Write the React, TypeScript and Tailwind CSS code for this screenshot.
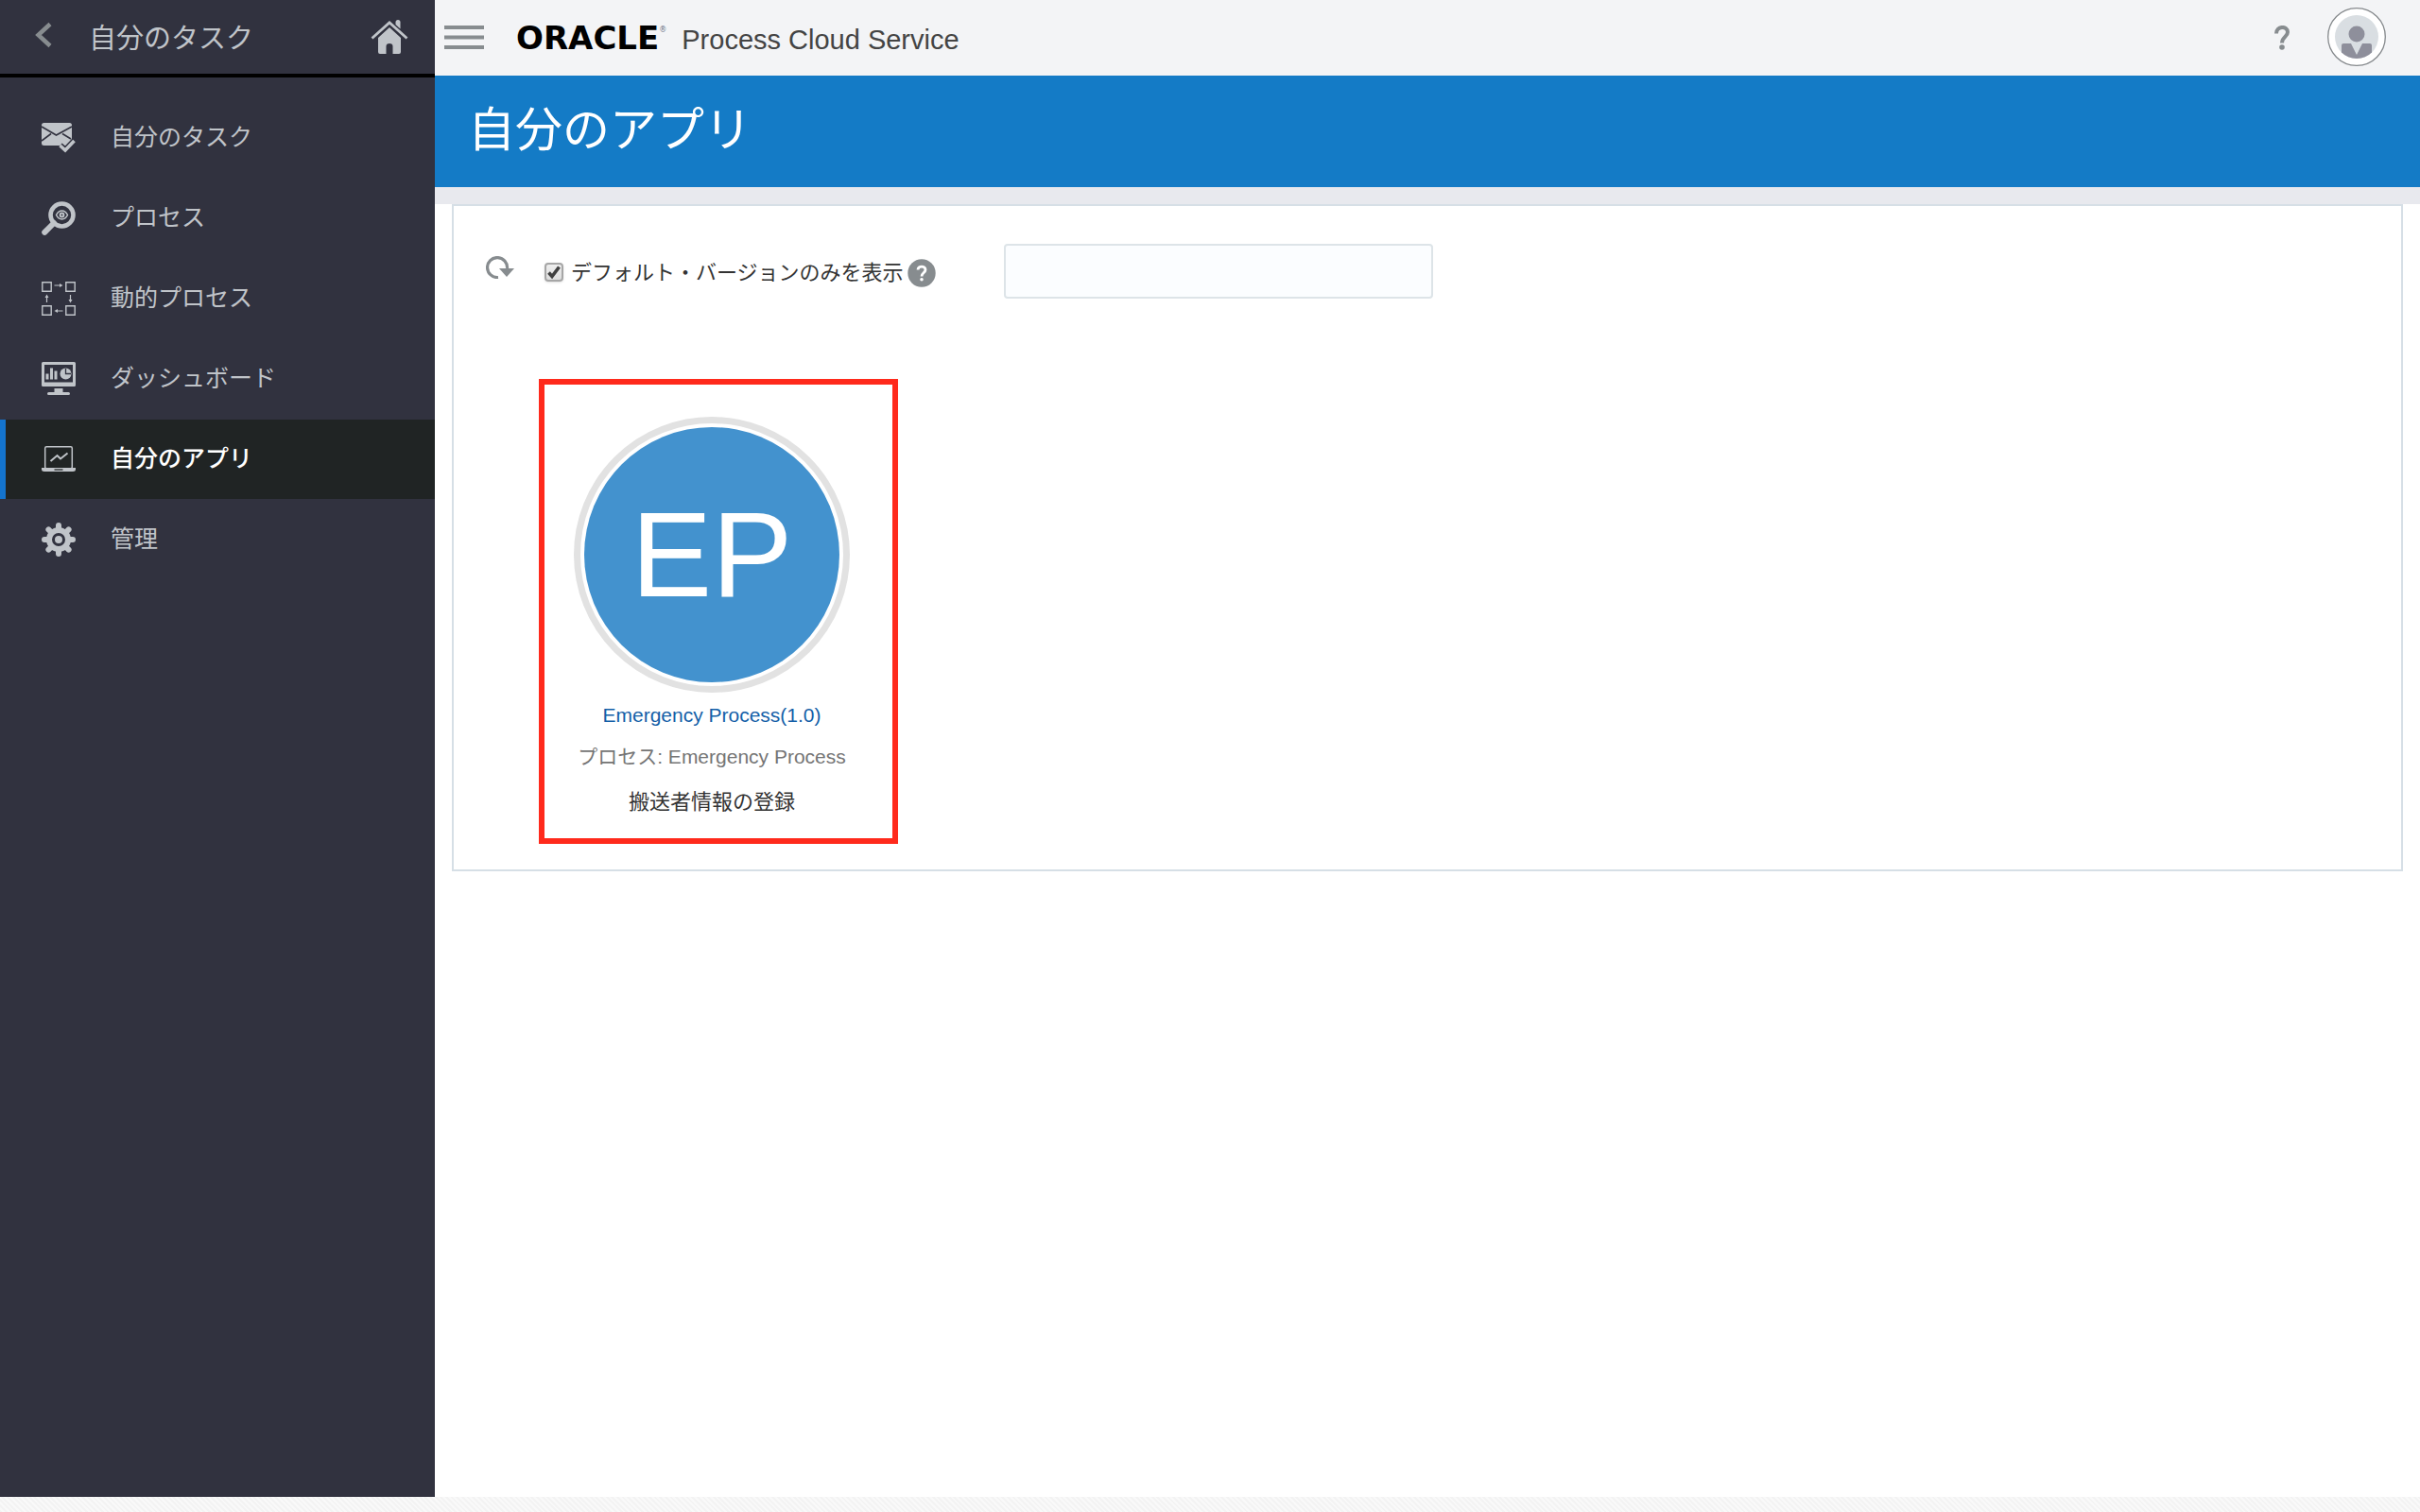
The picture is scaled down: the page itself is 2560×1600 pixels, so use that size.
import type { ReactNode } from "react";

const CheckedMail = () => (
  <svg className="size-9" viewBox="0 0 36 36" aria-hidden="true">
    <rect x="0" y="2" width="32" height="24" rx="2.5" fill="currentColor" />
    <path d="M0 6 L15.500 15 L32 6 M0 21 L10 13.500 M31 19 L22 13.500" fill="none" stroke="#31323f" strokeWidth="1.600" />
    <path d="M19.500 26 L25 31 L34.500 21" fill="none" stroke="#31323f" strokeWidth="6.500" />
    <path d="M19.500 26 L25 31 L34.500 21" fill="none" stroke="currentColor" strokeWidth="3.600" />
  </svg>
);

const SearchEye = () => (
  <svg className="size-9" viewBox="0 0 36 36" fill="none" stroke="currentColor" aria-hidden="true">
    <circle cx="21.500" cy="14.500" r="12" strokeWidth="4.600" />
    <path d="M13 23 L3.200 32.800" strokeWidth="6" strokeLinecap="round" />
    <path d="M15.500 14.500 C18.500 8.500 24.500 8.500 27.500 14.500 C24.500 20.500 18.500 20.500 15.500 14.500 Z" strokeWidth="1.500" />
    <circle cx="21.500" cy="14.500" r="1.900" strokeWidth="2" />
  </svg>
);

const Flow = () => (
  <svg className="size-9" viewBox="0 0 36 36" fill="none" stroke="currentColor" strokeWidth="1.400" aria-hidden="true">
    <path d="M.8 .8H10.200V10.200H.8Z M25.800 .8H35.200V10.200H25.800Z M.8 25.800H10.200V35.200H.8Z M25.800 25.800H35.200V35.200H25.800Z" />
    <path d="M13.500 4H19.500 M16.500 31H22.500 M5.500 22V16.500 M30.500 14V19.500" strokeWidth="1.200" />
    <path d="M19 2L22.500 4L19 6Z M17 29L13.500 31L17 33Z M3.500 17L5.500 13.500L7.500 17Z M28.500 19L30.500 22.500L32.500 19Z" fill="currentColor" stroke="none" />
  </svg>
);

const Dashboard = () => (
  <svg className="size-9" viewBox="0 0 36 36" fill="currentColor" aria-hidden="true">
    <path fillRule="evenodd" d="M1.500 0H34.500Q36 0 36 1.500V24.500Q36 26 34.500 26H1.500Q0 26 0 24.500V1.500Q0 0 1.500 0ZM3 3V21.500H33V3Z" />
    <path d="M4.500 12.500H7.500V18.500H4.500Z M9 6.500H12V18.500H9Z M13.500 9.500H16.500V18.500H13.500Z" />
    <circle cx="25.500" cy="12.500" r="6" />
    <path d="M25.500 7V12.500H31" fill="none" stroke="#31323f" strokeWidth="1.300" />
    <path d="M13.500 28H22.500V32H28.500Q30 32 30 33.500Q30 35 28.500 35H7.500Q6 35 6 33.500Q6 32 7.500 32H13.500Z" />
  </svg>
);

const LaptopChart = () => (
  <svg className="size-9" viewBox="0 0 36 36" aria-hidden="true">
    <rect x="3.700" y="4.700" width="28.600" height="23" rx="1.500" fill="none" stroke="currentColor" strokeWidth="1.500" />
    <path d="M0 27H36V28.500Q36 31 33 31H3Q0 31 0 28.500Z" fill="currentColor" />
    <path d="M13.500 29H22.500" stroke="#202424" strokeWidth="1.300" />
    <path d="M9.500 20 L16.500 14 L20 17.500 L27.500 11.500" fill="none" stroke="currentColor" strokeWidth="2" />
  </svg>
);

const Gear = () => (
  <svg className="size-9" viewBox="0 0 36 36" fill="none" stroke="currentColor" aria-hidden="true">
    <circle cx="18" cy="18" r="10" strokeWidth="6" />
    <circle cx="18" cy="18" r="4" fill="currentColor" stroke="none" />
    <path d="M18 3V7 M18 29V33 M3 18H7 M29 18H33 M7.400 7.400L10 10 M26 26L28.600 28.600 M28.600 7.400L26 10 M10 26L7.400 28.600" strokeWidth="6" strokeLinecap="round" />
  </svg>
);

const items: { label: string; icon: ReactNode; active?: boolean }[] = [
  { label: "自分のタスク", icon: <CheckedMail /> },
  { label: "プロセス", icon: <SearchEye /> },
  { label: "動的プロセス", icon: <Flow /> },
  { label: "ダッシュボード", icon: <Dashboard /> },
  { label: "自分のアプリ", icon: <LaptopChart />, active: true },
  { label: "管理", icon: <Gear /> },
];

function Sidebar() {
  return (
    <aside className="w-[460px] shrink-0 bg-[#31323f] text-[#c0c4c9]">
      <div className="flex h-[82px] items-center border-b-4 border-black pr-7 pl-9">
        <button aria-label="戻る" className="text-[#878c8f]">
          <svg className="mb-1 h-7 w-5" viewBox="0 0 20 28" fill="none" stroke="currentColor" strokeWidth="4.500" aria-hidden="true">
            <path d="M17 2.500 L4.500 14 L17 25.500" />
          </svg>
        </button>
        <span className="ml-[38px] flex-1 pt-1 text-[29px] leading-10">自分のタスク</span>
        <a href="#home" aria-label="ホーム">
          <svg className="h-9 w-10" viewBox="0 0 40 36" aria-hidden="true">
            <path d="M1.500 19.500 L20 3 L38.500 19.500" fill="none" stroke="currentColor" strokeWidth="2.800" />
            <path d="M26.500 5V2.500Q26.500 0 29 0Q31.500 0 31.500 2.500V9.500Z" fill="currentColor" />
            <path d="M20 8L32 19V34Q32 36 30 36H23.500V28Q23.500 25 20 25Q16.500 25 16.500 28V36H10Q8 36 8 34V19Z" fill="currentColor" />
          </svg>
        </a>
      </div>
      <nav className="flex flex-col gap-px pt-[22px] text-[25px]">
        {items.map((item) => (
          <a
            key={item.label}
            href="#nav"
            aria-current={item.active ? "page" : undefined}
            className={
              item.active
                ? "flex h-[84px] items-center gap-[37px] border-l-6 border-[#1474ce] bg-[#202424] pl-[38px]"
                : "flex h-[84px] items-center gap-[37px] border-l-6 border-transparent pl-[38px]"
            }
          >
            {item.icon}
            <span className={item.active ? "font-medium text-white" : ""}>{item.label}</span>
          </a>
        ))}
      </nav>
    </aside>
  );
}

function TopBar() {
  return (
    <header className="flex h-20 items-center bg-[#f3f4f6] pr-9 pl-2.5">
      <button aria-label="メニュー" className="text-[#878c8f]">
        <svg className="h-7 w-[42px]" viewBox="0 0 42 28" stroke="currentColor" strokeWidth="4" aria-hidden="true">
          <path d="M0 3H42 M0 13.500H42 M0 24H42" />
        </svg>
      </button>
      <div className="ml-[34px] flex items-baseline pt-1">
        <span className="flex items-start font-['DejaVu_Sans'] text-[34px] leading-[40px] font-bold text-black">
          ORACLE
          <span className="text-[8px] leading-6 font-normal text-gray-500">®</span>
        </span>
        <span className="ml-4 text-[29px] text-[#444444]">Process Cloud Service</span>
      </div>
      <button aria-label="ヘルプ" className="ml-auto text-[#878c8f]">
        <svg className="h-[26px] w-4" viewBox="0 0 16 26" fill="none" stroke="currentColor" strokeWidth="4" aria-hidden="true">
          <path d="M2 8.500 C2 0 14 0 14 7 C14 12 8 12 8 18.500" />
          <circle cx="8" cy="23" r="2.800" fill="currentColor" stroke="none" />
        </svg>
      </button>
      <button aria-label="ユーザー" className="ml-10">
        <svg className="mb-0.5 size-[62px]" viewBox="0 0 62 62" aria-hidden="true">
          <clipPath id="face"><circle cx="31" cy="31" r="23" /></clipPath>
          <circle cx="31" cy="31" r="30.300" fill="#fff" stroke="#85898c" strokeWidth="1.300" />
          <circle cx="31" cy="31" r="23" fill="#d9dee2" />
          <g clipPath="url(#face)" fill="#8e8f9b">
            <circle cx="31" cy="28" r="8.500" />
            <path d="M17 38H25L31 50L37 38H45Q47 38 47 40V56H15V40Q15 38 17 38Z" />
          </g>
        </svg>
      </button>
    </header>
  );
}

function AppCard() {
  return (
    <article className="ml-[90px] flex w-[380px] flex-col items-center border-6 border-[#ff2a1c] pt-[34px] pr-3.5 pb-[18px]">
      <div className="flex size-[292px] items-center justify-center rounded-full border-7 border-[#e2e2e2] p-1">
        <div className="flex size-full items-center justify-center rounded-full bg-[#4392ce] text-[128px] leading-none text-white">
          EP
        </div>
      </div>
      <a href="#app" className="mt-1 text-[21px] leading-10 text-[#145fa8]">Emergency Process(1.0)</a>
      <p className="mt-1 text-[21px] leading-10 text-[#757575]">プロセス: Emergency Process</p>
      <a href="#start" className="mt-2 text-[22px] leading-10 text-[#333333]">搬送者情報の登録</a>
    </article>
  );
}

export default function App() {
  return (
    <div className="flex min-h-screen flex-col bg-white font-['Liberation_Sans','Noto_Sans_CJK_JP',sans-serif]">
      <div className="flex flex-1">
        <Sidebar />
        <main className="min-w-0 flex-1">
          <TopBar />
          <h1 className="flex h-[118px] items-center bg-[#147bc6] pb-0.5 pl-[35px] text-[50px] text-white">自分のアプリ</h1>
          <div className="h-[18px] bg-[#e8e9ee]" />
          <section className="mx-[18px] border-2 border-[#d6dfe6] pt-10 pb-[27px]">
            <div className="flex h-[58px] items-center pl-[34px] text-[#878c8f]">
              <button aria-label="更新">
                <svg className="mb-2 h-6 w-[30px]" viewBox="0 0 30 24" aria-hidden="true">
                  <path d="M13 22.500 A10.500 10.500 0 1 1 22.500 13" fill="none" stroke="currentColor" strokeWidth="3.200" />
                  <path d="M14 13H30L22 22Z" fill="currentColor" />
                </svg>
              </button>
              <label className="ml-8 flex items-center gap-2 pt-0.5 text-[22px] text-[#333333]">
                <span className="grid size-5 place-items-center">
                  <input
                    type="checkbox"
                    defaultChecked
                    className="peer col-start-1 row-start-1 size-5 appearance-none rounded border-2 border-[#a6a6a6] bg-linear-to-b from-[#eeeeee] to-[#dddddd] shadow-sm"
                  />
                  <svg className="pointer-events-none invisible col-start-1 row-start-1 size-5 peer-checked:visible" viewBox="0 0 20 20" fill="none" stroke="#3f3f3f" strokeWidth="3.600" aria-hidden="true">
                    <path d="M4.500 10.500 L8 14.500 L15.500 4.500" />
                  </svg>
                </span>
                <span>デフォルト・バージョンのみを表示</span>
              </label>
              <button aria-label="バージョンのヘルプ" className="ml-1 pt-1">
                <svg className="size-[30px]" viewBox="0 0 30 30" aria-hidden="true">
                  <circle cx="15" cy="15" r="14.700" fill="currentColor" />
                  <path d="M11 11.500 C11 7 19 7 19 11.500 C19 14.500 15 14.500 15 18.500" fill="none" stroke="#fff" strokeWidth="2.800" />
                  <circle cx="15" cy="21.800" r="1.800" fill="#fff" />
                </svg>
              </button>
              <input
                type="text"
                aria-label="アプリの検索"
                className="ml-[72px] h-full w-[454px] rounded border-2 border-[#dde4e8] bg-[#fbfdff] px-3 text-[22px]"
              />
            </div>
            <div className="mt-[85px]">
              <AppCard />
            </div>
          </section>
        </main>
      </div>
      <footer className="h-4 bg-[repeating-linear-gradient(45deg,#f3f3f3_0px,#f3f3f3_2px,#f9f9f9_2px,#f9f9f9_4px)]" />
    </div>
  );
}
